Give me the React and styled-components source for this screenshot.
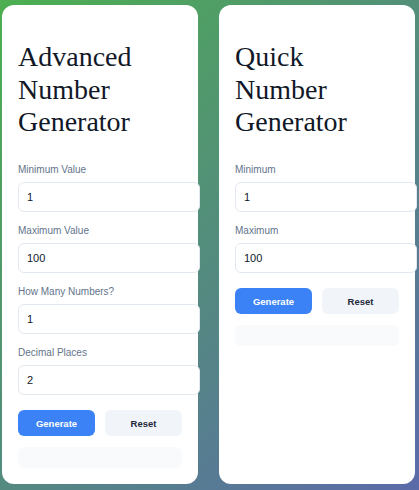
import React from "react";
import styled, { createGlobalStyle } from "styled-components";

const Global = createGlobalStyle`
  html, body { margin: 0; padding: 0; height: 100%; }
  body {
    background: linear-gradient(135deg, #4caf50 0%, #5b6aa9 100%);
    font-family: "Liberation Sans", Arial, sans-serif;
  }
  #root { min-height: 100%; }
`;

const Page = styled.div`
  display: flex;
  align-items: stretch;
  gap: 21px;
  padding: 5px 2px 7px;
  min-height: 100vh;
  box-sizing: border-box;
`;

const Card = styled.div`
  flex: none;
  width: 196px;
  box-sizing: border-box;
  padding: 16px;
  background: #ffffff;
  border-radius: 12px;
  display: flex;
  flex-direction: column;
`;

const Title = styled.h1`
  margin: 20px 0 25.5px;
  font-family: "Liberation Serif", "Times New Roman", serif;
  font-weight: 400;
  font-size: 28px;
  line-height: 32.5px;
  color: #111827;
`;

const Field = styled.div`
  margin-bottom: 13px;
`;

const Label = styled.label`
  display: block;
  font-size: 10px;
  line-height: 12px;
  margin-bottom: 6px;
  color: #64748b;
`;

const Input = styled.input`
  display: block;
  box-sizing: content-box;
  width: 100%;
  height: 28px;
  padding: 0 8px;
  border: 1px solid #e2e8f0;
  border-radius: 6px;
  background: #fff;
  font-family: "Liberation Sans", Arial, sans-serif;
  font-size: 11px;
  color: #0f172a;
  outline: none;
`;

const Buttons = styled.div`
  display: grid;
  grid-template-columns: 1fr 1fr;
  gap: 10px;
  margin-top: 2px;
`;

const Button = styled.button`
  height: 26px;
  border: none;
  border-radius: 6px;
  font-family: "Liberation Sans", Arial, sans-serif;
  font-size: 9.5px;
  font-weight: 700;
  cursor: pointer;
  background: ${(p) => (p.$primary ? "#3b82f6" : "#f1f5f9")};
  color: ${(p) => (p.$primary ? "#ffffff" : "#1e293b")};
`;

const Result = styled.div`
  margin-top: 11px;
  height: 21px;
  border-radius: 6px;
  background: #f8fafc;
`;

function Generator({ title, fields }) {
  return (
    <Card>
      <Title>{title}</Title>
      {fields.map((f) => (
        <Field key={f.label}>
          <Label>{f.label}</Label>
          <Input type="text" defaultValue={f.value} />
        </Field>
      ))}
      <Buttons>
        <Button $primary>Generate</Button>
        <Button>Reset</Button>
      </Buttons>
      <Result />
    </Card>
  );
}

export default function App() {
  return (
    <>
      <Global />
      <Page>
        <Generator
          title="Advanced Number Generator"
          fields={[
            { label: "Minimum Value", value: "1" },
            { label: "Maximum Value", value: "100" },
            { label: "How Many Numbers?", value: "1" },
            { label: "Decimal Places", value: "2" },
          ]}
        />
        <Generator
          title="Quick Number Generator"
          fields={[
            { label: "Minimum", value: "1" },
            { label: "Maximum", value: "100" },
          ]}
        />
      </Page>
    </>
  );
}
